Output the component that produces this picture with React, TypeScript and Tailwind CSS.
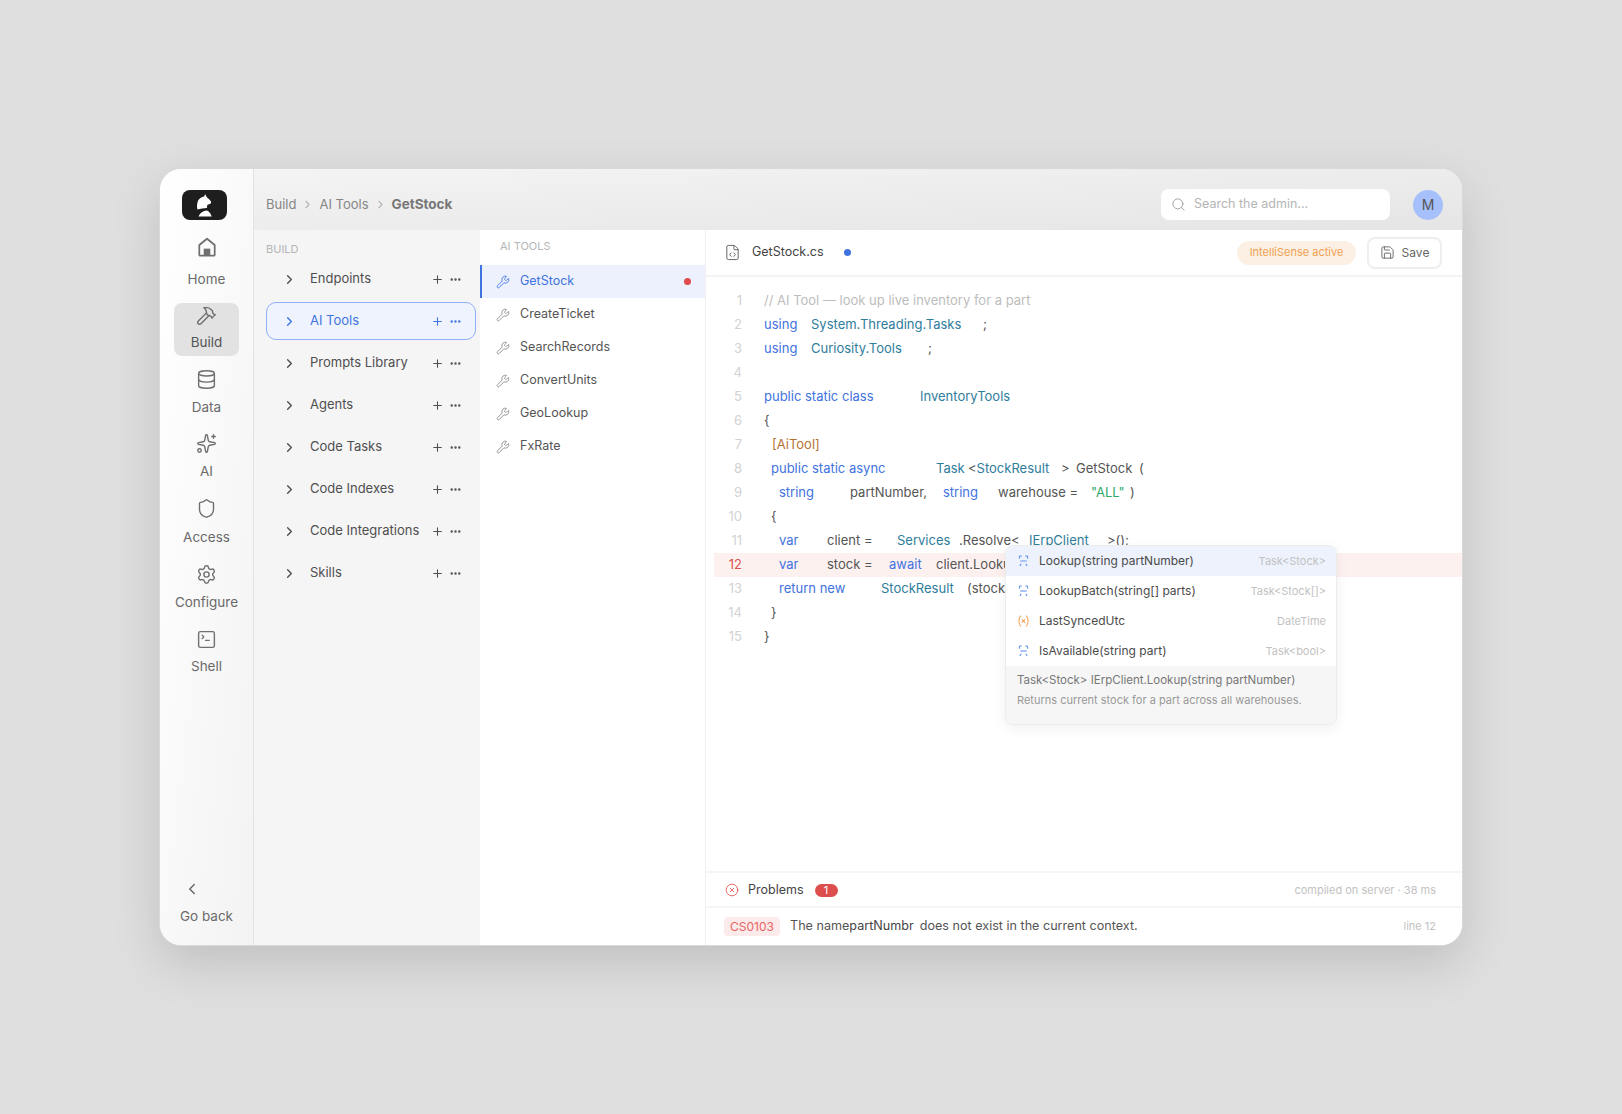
import { ChevronLeft, ChevronRight, CircleX, Database, Ellipsis, FileCode, Hammer, Plus, Save, Search, Settings, Shield, Sparkles, SquareTerminal, Wrench } from 'lucide-react'
import type { ReactNode } from 'react'

const kw = 'text-[#3f73e0]'
const ty = 'text-[#2f7d9c]'

const railItems = [
  { label: 'Home', box: 'h-[58px]', icon: <HomeIcon /> },
  { label: 'Build', box: 'mt-[10px] h-[53px]', active: true, icon: <Hammer size={21} strokeWidth={1.6} /> },
  { label: 'Data', box: 'mt-[11px] h-[54px]', icon: <Database size={21} strokeWidth={1.6} /> },
  { label: 'AI', box: 'mt-[10px] h-[54px]', icon: <Sparkles size={21} strokeWidth={1.6} /> },
  { label: 'Access', box: 'mt-[11px] h-[55px]', icon: <Shield size={21} strokeWidth={1.6} /> },
  { label: 'Configure', box: 'mt-[11px] h-[54px]', icon: <Settings size={21} strokeWidth={1.6} /> },
  { label: 'Shell', box: 'mt-[11px] h-[53px]', icon: <SquareTerminal size={21} strokeWidth={1.6} /> },
]

const treeItems = ['Endpoints', 'AI Tools', 'Prompts Library', 'Agents', 'Code Tasks', 'Code Indexes', 'Code Integrations', 'Skills']
const tools = ['GetStock', 'CreateTicket', 'SearchRecords', 'ConvertUnits', 'GeoLookup', 'FxRate']

function HomeIcon() {
  return (
    <svg width="22" height="22" viewBox="0 0 20 20" fill="none" stroke="currentColor" strokeWidth="1.6" strokeLinejoin="round">
      <path d="M3 8.2 10 2.500l7 5.700V17a.8.8 0 0 1-.8.8H3.800A.8.8 0 0 1 3 17z" />
      <rect x="7" y="11.500" width="6" height="6.300" fill="currentColor" stroke="none" />
    </svg>
  )
}

function Logo() {
  return (
    <svg width="15" height="23" viewBox="0 0 15 23" fill="#fff">
      <path d="M8 0l2 3.500c1.500 1 2.800 2.500 4 4 .3.800 0 1.800-.8 2.300L10.300 11c-.3 1 0 1.800-.5 3-3 .2-6.500.7-9.300 1.600C-.3 13 0 10.500.5 8.500 1.200 5.500 4 3 7.300 2.600z" />
      <path d="M1.500 22.500C3 18.800 6 16.800 10 16.500c2.300 1.200 4 3.500 4.700 6z" />
    </svg>
  )
}

function MethodIcon() {
  return (
    <svg width="12" height="14" viewBox="0 0 12 14" fill="none" stroke="#5b8def" strokeWidth="1.1">
      <path d="M1.500 4.500V2.500q0-1 1-1h1.500M8 1.500h1.500q1 0 1 1v2M2 12.500 3.500 10M10 12.500 8.500 10" />
      <path d="M2.500 7h7" stroke="#a9c3f6" strokeWidth="2" />
    </svg>
  )
}

function VarIcon() {
  return (
    <svg width="12" height="14" viewBox="0 0 12 14" fill="none" stroke="#f0a256" strokeWidth="1.1" strokeLinecap="round">
      <path d="M3 1.500C1.500 3 1 5 1 7s.5 4 2 5.500M9 1.500C10.500 3 11 5 11 7s-.5 4-2 5.500M4.500 5.500l3 3M7.500 5.500l-3 3" />
    </svg>
  )
}

function RailItem({ label, icon, active, box }: { label: string; icon: ReactNode; active?: boolean; box: string }) {
  return (
    <div className={`flex w-[65px] flex-col items-center justify-between rounded-lg pb-[4px] ${box} ${active ? 'bg-[#e2e2e2] text-[#555]' : 'text-[#6a6a6a]'}`}>
      <span className="flex h-6 items-center justify-center text-[#6f6f6f]">{icon}</span>
      <span className="text-[13.5px] leading-[20px]">{label}</span>
    </div>
  )
}

function TreeRow({ label }: { label: string }) {
  const active = label === 'AI Tools'
  return (
    <div className={`flex h-[38px] items-center rounded-[10px] border pl-[15px] pr-[13px] text-[13px] ${active ? 'border-[#8fb0f7] bg-[#eef3fe] text-[#3f73e0]' : 'border-transparent text-[#4f4f4f]'}`}>
      <ChevronRight size={15} strokeWidth={2.2} className="mr-[13px]" />
      <span className="flex-1 whitespace-nowrap">{label}</span>
      <Plus size={13} strokeWidth={2} className="mr-[5px]" />
      <Ellipsis size={13} strokeWidth={2.5} />
    </div>
  )
}

function CodeLine({ n, error, children }: { n: number; error?: boolean; children?: ReactNode }) {
  return (
    <div className={`flex h-6 items-center whitespace-nowrap ${error ? 'bg-[#fdf1f0]' : ''}`}>
      <span className={`w-[28px] text-right ${error ? 'text-[#d9534f]' : 'text-[#d2d2d2]'}`}>{n}</span>
      <span className="ml-[22px] flex text-[#555]">{children}</span>
    </div>
  )
}

function CompletionRow({ label, type, active, icon }: { label: string; type: string; active?: boolean; icon: ReactNode }) {
  return (
    <div className={`flex h-[30px] items-center pl-[12px] pr-[10px] ${active ? 'bg-[#edf2fd]' : ''}`}>
      <span className="mr-[10px] flex w-[11px] justify-center">{icon}</span>
      <span className="flex-1 text-[12px] text-[#4a4a4a]">{label}</span>
      <span className="text-[11px] text-[#c2c2c2]">{type}</span>
    </div>
  )
}

export default function App() {
  return (
    <div className="flex h-[1114px] w-full items-center justify-center bg-[#dfdfdf] font-['Inter','Liberation_Sans',sans-serif]">
      <div className="flex h-[778px] w-[1304px] overflow-hidden rounded-[22px] border border-[#d9d9d9] bg-[#f5f5f5] shadow-[0_18px_50px_rgba(0,0,0,0.14)]">
        {/* rail */}
        <aside className="flex w-[94px] shrink-0 flex-col items-center border-r border-[#e3e3e3] bg-gradient-to-br from-white to-[#f3f3f3] pb-[19px] pt-[21px]">
          <div className="ml-[22px] flex h-[30px] w-[45px] items-center justify-center self-start rounded-lg bg-[#1e1e1e]">
            <Logo />
          </div>
          <div className="mt-[15px] flex flex-col">
            {railItems.map(r => (
              <RailItem key={r.label} label={r.label} icon={r.icon} box={r.box} active={r.active} />
            ))}
          </div>
          <div className="mt-auto flex flex-col items-center text-[#6a6a6a]">
            <ChevronLeft size={18} strokeWidth={2} className="-translate-x-[14px]" />
            <span className="mt-[8px] text-[13.5px] leading-[20px]">Go back</span>
          </div>
        </aside>

        <div className="flex min-w-0 flex-1 flex-col">
          {/* top bar */}
          <header className="flex h-[61px] shrink-0 items-center bg-gradient-to-br from-[#f4f4f4] to-[#e5e5e5] pl-[12px] pr-[19px] pt-[10px]">
            <span className="text-[13px] text-[#858585]">Build</span>
            <ChevronRight size={13} className="mx-[5px] text-[#b5b5b5]" />
            <span className="text-[13px] text-[#858585]">AI Tools</span>
            <ChevronRight size={13} className="mx-[5px] text-[#b5b5b5]" />
            <span className="text-[13.5px] font-bold text-[#777]">GetStock</span>
            <div className="ml-auto flex h-[31px] w-[229px] items-center rounded-lg bg-white pl-[10px]">
              <Search size={15} strokeWidth={1.6} className="text-[#a5a5a5]" />
              <span className="ml-[8px] text-[12.5px] text-[#b5b5b5]">Search the admin...</span>
            </div>
            <div className="ml-[23px] flex h-[30px] w-[30px] items-center justify-center rounded-full bg-[#a5c0fb] text-[14px] text-[#555]">M</div>
          </header>

          <div className="flex min-h-0 flex-1">
            {/* tree */}
            <nav className="w-[226px] shrink-0 bg-[#f5f5f5] pl-[12px] pr-[4px] pt-[12px]">
              <div className="text-[11px] leading-[14px] text-[#b5b5b5]">BUILD</div>
              <div className="mt-[4px] flex flex-col gap-[4px]">
                {treeItems.map(t => (
                  <TreeRow key={t} label={t} />
                ))}
              </div>
            </nav>

            {/* tool list */}
            <section className="w-[226px] shrink-0 border-r border-[#f0f0f0] bg-white pt-[9px]">
              <div className="pl-[20px] text-[11px] leading-[14px] text-[#b5b5b5]">AI TOOLS</div>
              <div className="mt-[12px] flex flex-col">
                {tools.map((t, i) => (
                  <div key={t} className={`flex h-[33px] items-center border-l-2 pl-[14px] pr-[14px] text-[12.5px] ${i === 0 ? 'border-[#3f73e0] bg-[#ecf1fd] text-[#3f73e0]' : 'border-transparent text-[#555]'}`}>
                    <Wrench size={14} strokeWidth={1.5} className={`mr-[10px] ${i === 0 ? '' : 'text-[#888]'}`} />
                    <span className="flex-1">{t}</span>
                    {i === 0 && <span className="h-[7px] w-[7px] rounded-full bg-[#e04b4b]" />}
                  </div>
                ))}
              </div>
            </section>

            {/* editor */}
            <main className="flex min-w-0 flex-1 flex-col bg-white">
              <div className="flex h-[47px] shrink-0 items-center border-b-2 border-[#f4f4f4] pl-[18px] pr-[20px]">
                <FileCode size={17} strokeWidth={1.4} className="text-[#666]" />
                <span className="ml-[11px] text-[12.5px] text-[#444]">GetStock.cs</span>
                <span className="ml-[20px] h-[7px] w-[7px] rounded-full bg-[#3f73e0]" />
                <span className="ml-auto flex h-[24px] w-[119px] items-center justify-center rounded-full bg-[#fbf0e3] text-[11px] text-[#f0a050]">IntelliSense active</span>
                <button className="ml-[11px] flex h-[32px] w-[75px] items-center justify-center gap-[7px] rounded-lg border-2 border-[#eeeeee] text-[12px] text-[#666]">
                  <Save size={15} strokeWidth={1.5} />
                  Save
                </button>
              </div>

              <div className="relative min-h-0 flex-1 pl-[8px] pt-[12px] text-[13px]">
                <CodeLine n={1}><span className="text-[#bdbdbd]">// AI Tool — look up live inventory for a part</span></CodeLine>
                <CodeLine n={2}><span className={`w-[47px] ${kw}`}>using</span><span className={`w-[172px] ${ty}`}>System.Threading.Tasks</span><span>;</span></CodeLine>
                <CodeLine n={3}><span className={`w-[47px] ${kw}`}>using</span><span className={`w-[117px] ${ty}`}>Curiosity.Tools</span><span>;</span></CodeLine>
                <CodeLine n={4} />
                <CodeLine n={5}><span className={`w-[156px] ${kw}`}>public static class</span><span className={ty}>InventoryTools</span></CodeLine>
                <CodeLine n={6}>{'{'}</CodeLine>
                <CodeLine n={7}><span className="ml-[8px] text-[#b8702f]">[AiTool]</span></CodeLine>
                <CodeLine n={8}><span className={`ml-[7px] w-[165px] ${kw}`}>public static async</span><span className={`w-[32px] ${ty}`}>Task</span><span className="w-[93px]">&lt;<span className={ty}>StockResult</span></span><span className="w-[15px]">&gt;</span><span className="w-[63px]">GetStock</span><span>(</span></CodeLine>
                <CodeLine n={9}><span className={`ml-[15px] w-[71px] ${kw}`}>string</span><span className="w-[93px]">partNumber,</span><span className={`w-[55px] ${kw}`}>string</span><span className="w-[93px]">warehouse =</span><span className="w-[39px] text-[#2fa968]">"ALL"</span><span>)</span></CodeLine>
                <CodeLine n={10}><span className="ml-[7px]">{'{'}</span></CodeLine>
                <CodeLine n={11}><span className={`ml-[15px] w-[48px] ${kw}`}>var</span><span className="w-[70px]">client =</span><span className={`w-[62px] ${ty}`}>Services</span><span className="w-[70px]">.Resolve&lt;</span><span className={`w-[78px] ${ty}`}>IErpClient</span><span>&gt;();</span></CodeLine>
                <CodeLine n={12} error><span className={`ml-[15px] w-[48px] ${kw}`}>var</span><span className="w-[62px]">stock =</span><span className={`w-[47px] ${kw}`}>await</span><span>client.Lookup</span></CodeLine>
                <CodeLine n={13}><span className={`ml-[15px] w-[102px] ${kw}`}>return new</span><span className={`w-[86px] ${ty}`}>StockResult</span><span>(stock</span></CodeLine>
                <CodeLine n={14}><span className="ml-[7px]">{'}'}</span></CodeLine>
                <CodeLine n={15}>{'}'}</CodeLine>

                {/* completion popup */}
                <div className="absolute left-[299px] top-[268px] w-[332px] overflow-hidden rounded-lg border border-[#ececec] bg-white shadow-[0_4px_14px_rgba(0,0,0,0.06)]">
                  <CompletionRow active label="Lookup(string partNumber)" type="Task<Stock>" icon={<MethodIcon />} />
                  <CompletionRow label="LookupBatch(string[] parts)" type="Task<Stock[]>" icon={<MethodIcon />} />
                  <CompletionRow label="LastSyncedUtc" type="DateTime" icon={<VarIcon />} />
                  <CompletionRow label="IsAvailable(string part)" type="Task<bool>" icon={<MethodIcon />} />
                  <div className="h-[58px] bg-[#f6f6f6] px-[11px] pt-[6px]">
                    <div className="text-[11.5px] leading-[16px] text-[#777]">Task&lt;Stock&gt; IErpClient.Lookup(string partNumber)</div>
                    <div className="mt-[4px] text-[11px] leading-[16px] text-[#999]">Returns current stock for a part across all warehouses.</div>
                  </div>
                </div>
              </div>

              {/* problems */}
              <div className="shrink-0 text-[12px]">
                <div className="flex h-[37px] items-center border-y-2 border-[#f5f5f5] pl-[19px] pr-[26px] pt-[1px]">
                  <CircleX size={14} strokeWidth={1.5} className="text-[#e05a5a]" />
                  <span className="ml-[9px] text-[12.5px] text-[#444]">Problems</span>
                  <span className="ml-[11px] flex h-[13px] w-[23px] items-center justify-center rounded-full bg-[#dd4f4f] text-[11px] text-white">1</span>
                  <span className="ml-auto text-[11px] text-[#c2c2c2]">compiled on server · 38 ms</span>
                </div>
                <div className="flex h-[37px] items-center pl-[18px] pr-[26px]">
                  <span className="flex h-[19px] w-[56px] items-center justify-center rounded bg-[#fdeaea] text-[12px] text-[#e56565]">CS0103</span>
                  <span className="ml-[10px] text-[12.6px] text-[#555]">The name</span>
                  <span className="mr-[6px] text-[12.6px] text-[#444]">partNumbr</span>
                  <span className="text-[12.6px] text-[#555]">does not exist in the current context.</span>
                  <span className="ml-auto text-[11px] text-[#c2c2c2]">line 12</span>
                </div>
              </div>
            </main>
          </div>
        </div>
      </div>
    </div>
  )
}
